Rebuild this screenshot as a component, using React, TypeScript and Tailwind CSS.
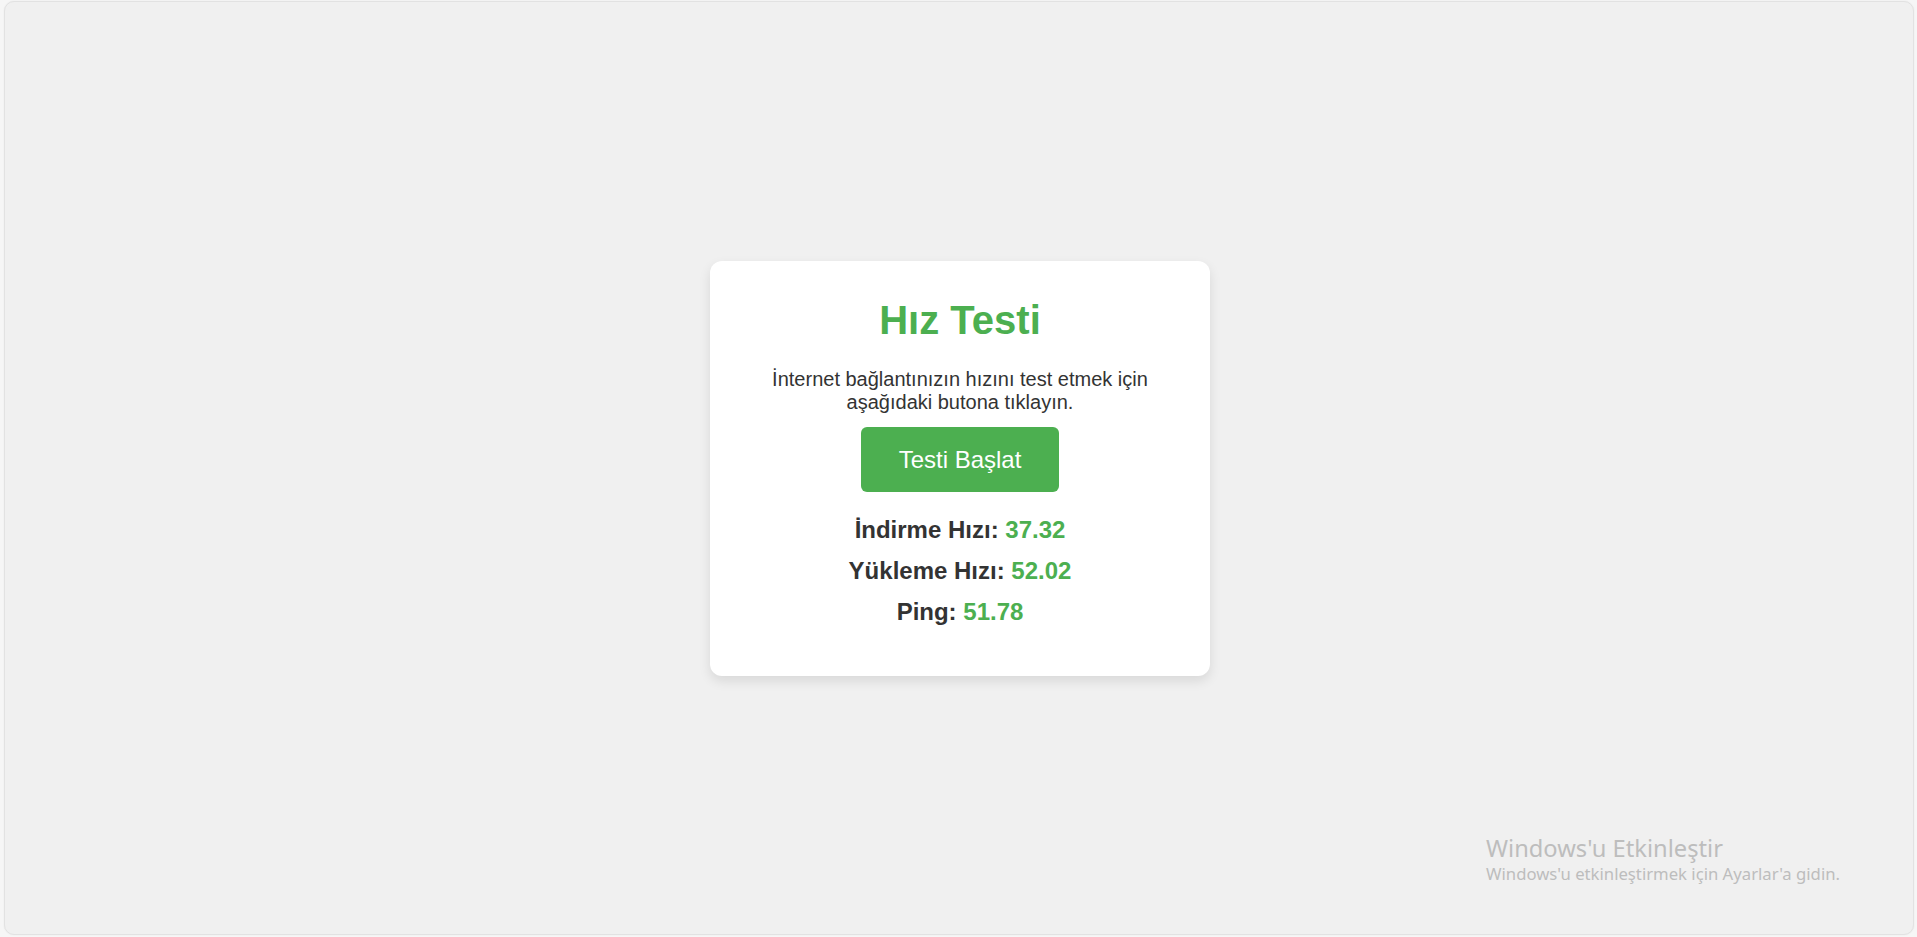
import React from "react";

export default function App() {
  const results = [
    { label: "İndirme Hızı:", value: "37.32" },
    { label: "Yükleme Hızı:", value: "52.02" },
    { label: "Ping:", value: "51.78" },
  ];
  return (
    <div className="flex h-[937px] w-full flex-col bg-[#f6f6f6] pl-[4px] pr-[3px] pt-[1px] pb-[2px]">
      <div className="relative flex flex-1 items-center justify-center rounded-[10px] border border-[#e2e2e2] bg-[#f0f0f0] shadow-[0_0_2px_rgba(0,0,0,0.06)]">
        <div
          className="ml-[2px] flex w-[500px] flex-col items-center rounded-[12px] bg-white px-[25px] pt-[36px] pb-[51px] text-center shadow-[0_5px_12px_rgba(0,0,0,0.1)]"
          style={{ fontFamily: '"Liberation Sans", Arial, sans-serif' }}
        >
          <h1 className="text-[40px] font-bold leading-[46px] text-[#4caf50]">Hız Testi</h1>
          <p className="mt-[25px] text-[20px] leading-[23px] text-[#333333]">
            İnternet bağlantınızın hızını test etmek için aşağıdaki butona tıklayın.
          </p>
          <button className="mt-[13px] flex h-[65px] w-[198px] items-center justify-center rounded-[6px] bg-[#4caf50] text-[24px] leading-[29px] text-white">
            Testi Başlat
          </button>
          <div className="mt-[25px] flex flex-col gap-[15px]">
            {results.map((r) => (
              <p key={r.label} className="text-[24px] font-bold leading-[26px] text-[#333333]">
                {r.label} <span className="text-[#4caf50]">{r.value}</span>
              </p>
            ))}
          </div>
        </div>
        <div
          className="absolute left-[1481px] top-[831px] text-[#bdbdbd]"
          style={{ fontFamily: '"Noto Sans", "Open Sans", sans-serif' }}
        >
          <div className="text-[23.7px] leading-[30px]">Windows'u Etkinleştir</div>
          <div className="text-[16.7px] leading-[22px]">Windows'u etkinleştirmek için Ayarlar'a gidin.</div>
        </div>
      </div>
    </div>
  );
}
